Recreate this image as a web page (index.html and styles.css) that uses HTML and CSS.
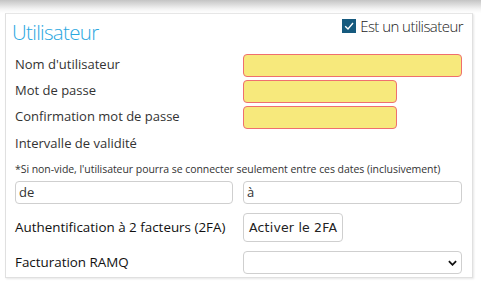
FILE: index.html
```html
<!DOCTYPE html>
<html lang="fr">
<head>
<meta charset="utf-8">
<link rel="stylesheet" href="styles.css">
</head>
<body>
<div class="topshade"></div>
<section class="panel">
  <div class="head">
    <h2 class="title">Utilisateur</h2>
    <label class="check"><span class="box"><svg viewBox="0 0 14 14" width="14" height="14"><path d="M3.2 7.2 L6 10 L11 4" fill="none" stroke="#fff" stroke-width="1.4"/></svg></span>Est un utilisateur</label>
  </div>
  <div class="grid">
    <div class="lbl r1">Nom d'utilisateur</div>
    <div class="req wide r1"></div>
    <div class="lbl r2">Mot de passe</div>
    <div class="req short r2"></div>
    <div class="lbl r3">Confirmation mot de passe</div>
    <div class="req short r3"></div>
  </div>
  <div class="lbl interval">Intervalle de validité</div>
  <div class="note">*Si non-vide, l'utilisateur pourra se connecter seulement entre ces dates (inclusivement)</div>
  <div class="dates">
    <div class="field">de</div>
    <div class="field">à</div>
  </div>
  <div class="row2fa">
    <div class="lbl big">Authentification à 2 facteurs (2FA)</div>
    <div><button class="btn">Activer le 2FA</button></div>
  </div>
  <div class="rowramq">
    <div class="lbl big">Facturation RAMQ</div>
    <div class="select"><svg viewBox="0 0 10 6" width="9" height="6"><path d="M1 1 L5 5 L9 1" fill="none" stroke="#111" stroke-width="2"/></svg></div>
  </div>
</section>
</body>
</html>
```
FILE: styles.css
```css
html, body { margin: 0; padding: 0; background: #fff; }
body { width: 481px; height: 293px; overflow: hidden; font-family: "Open Sans", sans-serif; color: #333; }
.topshade { height: 13px; background: linear-gradient(#c4c4c4, #f4f4f4 70%, #fff); }
.panel {
  margin-left: 5px; width: 448px; padding: 0 9px 3px 9px;
  border: 1px solid #e0e0e0; border-top-color: #e6e6e6;
  box-shadow: 1px 1px 2px rgba(0,0,0,0.10);
  background: #fff;
}
.head { display: flex; justify-content: space-between; height: 40px; }
.title { margin: 4px 0 0 -3px; font-size: 20.5px; font-weight: 300; color: #2aa7df; line-height: 28px; letter-spacing: -0.7px; }
.check { display: flex; align-items: center; height: 18px; margin-top: 3px; font-size: 15px; font-weight: 300; color: #222; letter-spacing: -0.55px; }
.box { width: 14px; height: 14px; background: #165a7e; margin-right: 4px; display: flex; }
.grid { display: grid; grid-template-columns: 218px 219px; column-gap: 10px; row-gap: 3px; }
.lbl { font-size: 13px; line-height: 23px; }
.grid .lbl { line-height: 20px; }
.req { height: 21px; background: #f7e97c; border: 1px solid #ef6f6f; border-radius: 4px; }
.short { width: 152px; }
.interval { margin-top: 2px; line-height: 24px; }
.note { font-size: 10.5px; margin-top: 7px; line-height: 14px; letter-spacing: -0.05px; }
.dates { display: grid; grid-template-columns: 218px 219px; column-gap: 10px; margin-top: 5px; }
.field { height: 21px; border: 1px solid #cfcfcf; border-radius: 4px; font-size: 13px; line-height: 21px; padding-left: 3px; color: #333; }
.row2fa { display: grid; grid-template-columns: 218px 219px; column-gap: 10px; margin-top: 9px; align-items: center; }
.big { font-size: 13.4px; color: #111; white-space: nowrap; }
.btn { display: block; height: 29px; padding: 0 5px; border: 1px solid #cfcfcf; border-radius: 4px; background: #fff; font-family: "DejaVu Sans", sans-serif; font-size: 12.5px; color: #222; letter-spacing: 0.2px; }
.rowramq { display: grid; grid-template-columns: 218px 219px; column-gap: 10px; margin-top: 9px; align-items: center; }
.select { height: 21px; border: 1px solid #cfcfcf; border-radius: 4px; display: flex; align-items: center; justify-content: flex-end; padding-right: 4px; }
```
